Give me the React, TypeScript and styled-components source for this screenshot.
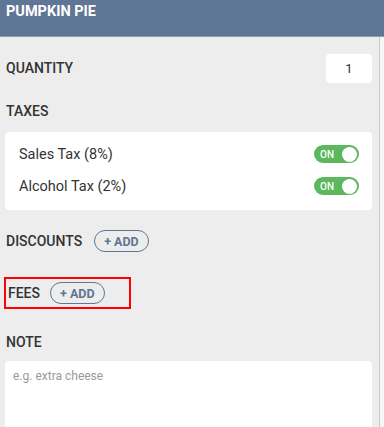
import styled, { createGlobalStyle } from "styled-components";

const GlobalStyle = createGlobalStyle`
  html, body {
    margin: 0;
    padding: 0;
    background: #f7f7f7;
    font-family: Roboto, "Liberation Sans", sans-serif;
  }
`

const Page = styled.div`
  width: 384px;
  height: 427px;
  overflow: hidden;
  display: flex;
  flex-direction: column;
`

const Header = styled.div`
  height: 37px;
  background: #5f7694;
  border-bottom: 1px solid #8fa0b6;
  color: #fff;
  font-weight: 700;
  font-size: 14.5px;
  padding: 3px 6px 0;
  box-sizing: border-box;
  flex-shrink: 0;
`

const Body = styled.div`
  width: 380px;
  flex: 1;
  background: #ededed;
  border-right: 1px solid #c9c9c9;
  padding: 16px 7px 0 5px;
  box-sizing: border-box;
  display: flex;
  flex-direction: column;
`

const Label = styled.div`
  font-size: 14px;
  font-weight: 500;
  color: #333;
  padding-left: 1px;
`

const Row = styled.div`
  display: flex;
  align-items: center;
  gap: 12px;
`

const QuantityRow = styled(Row)`
  justify-content: space-between;
  height: 30px;
`

const QuantityBox = styled.div`
  width: 46px;
  height: 29px;
  background: #fff;
  border-radius: 4px;
  display: flex;
  align-items: center;
  justify-content: center;
  font-size: 13px;
  color: #333;
`

const Section = styled.div<{ top: number }>`
  margin-top: ${({ top }) => top}px;
`

const Card = styled.div`
  background: #fff;
  border-radius: 4px;
  padding: 6px 13px 8px 14px;
  margin-top: 13px;
  display: flex;
  flex-direction: column;
`

const TaxRow = styled.div`
  display: flex;
  align-items: center;
  justify-content: space-between;
  height: 32px;
  font-size: 14.5px;
  color: #333;
`

const Toggle = styled.div`
  width: 45px;
  height: 18px;
  border-radius: 9px;
  background: #5cb85c;
  box-sizing: border-box;
  padding: 0 2px 0 6px;
  display: flex;
  align-items: center;
  justify-content: space-between;
  color: #fff;
  font-size: 10px;
  font-weight: 500;
`

const Knob = styled.div`
  width: 15px;
  height: 15px;
  border-radius: 50%;
  background: #fff;
`

const AddButton = styled.div`
  height: 22px;
  padding: 0 9px;
  border: 1.5px solid #5f7694;
  border-radius: 11px;
  box-sizing: border-box;
  display: flex;
  align-items: center;
  color: #5f7694;
  font-size: 12.5px;
  font-weight: 700;
`

const Highlight = styled.div`
  width: 127px;
  height: 32px;
  margin-left: -1px;
  border: 2px solid #f00;
  box-sizing: border-box;
  display: flex;
  align-items: center;
  padding-left: 1px;
  gap: 10px;
`

const Note = styled.div`
  margin-top: 11px;
  flex: 1;
  background: #fff;
  border-radius: 4px 4px 0 0;
  padding: 8px 8px;
  font-size: 12px;
  color: #9a9a9a;
`

const TaxLine = ({ label }: { label: string }) => (
  <TaxRow>
    {label}
    <Toggle>
      ON
      <Knob />
    </Toggle>
  </TaxRow>
)

export default function App() {
  return (
    <Page>
      <GlobalStyle />
      <Header>PUMPKIN PIE</Header>
      <Body>
        <QuantityRow>
          <Label>QUANTITY</Label>
          <QuantityBox>1</QuantityBox>
        </QuantityRow>
        <Section top={20}>
          <Label>TAXES</Label>
          <Card>
            <TaxLine label="Sales Tax (8%)" />
            <TaxLine label="Alcohol Tax (2%)" />
          </Card>
        </Section>
        <Section top={20}>
          <Row>
            <Label>DISCOUNTS</Label>
            <AddButton>+ ADD</AddButton>
          </Row>
        </Section>
        <Section top={25}>
          <Highlight>
            <Label>FEES</Label>
            <AddButton>+ ADD</AddButton>
          </Highlight>
        </Section>
        <Section top={25}>
          <Label>NOTE</Label>
        </Section>
        <Note>e.g. extra cheese</Note>
      </Body>
    </Page>
  );
}
